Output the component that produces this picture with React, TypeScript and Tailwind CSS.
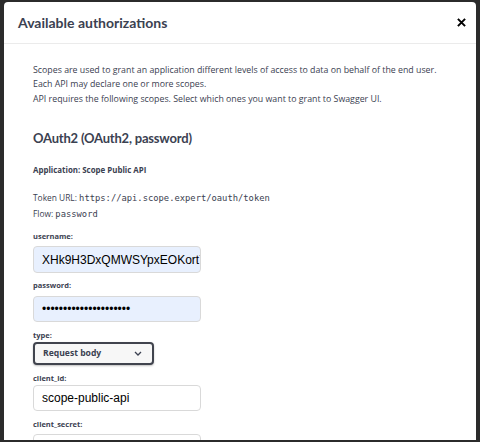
import React from "react";

const label = "block text-[7.5px] font-bold leading-[12px] text-[#3b4151]";
const input =
  "block w-[168px] rounded-[4px] border border-[#d9d9d9] pl-[8px] text-[12px] text-black outline-none";
const sans = { fontFamily: '"Liberation Sans", Arial, sans-serif' };
const mono = { fontFamily: '"DejaVu Sans Mono", monospace' };

const App: React.FC = () => {
  return (
    <div className="h-[442px] w-[480px] overflow-hidden bg-[#2b2b2b] pl-[4px] pr-[4px] pt-[2px] pb-[2px]">
      <div
        className="h-[438px] overflow-hidden rounded-t-[4px] bg-white text-[#3b4151]"
        style={{ fontFamily: '"Open Sans", sans-serif' }}
      >
        {/* header */}
        <div className="flex h-[42px] items-center justify-between border-b border-[#ebebeb] pl-[14px] pr-[10px]">
          <h3 className="text-[14px] font-bold text-[#3b4151]" style={{ fontFamily: "Lato, sans-serif" }}>
            Available authorizations
          </h3>
          <svg width="9" height="9" viewBox="0 0 10 10" className="mt-[-1px]">
            <path d="M1 1 L9 9 M9 1 L1 9" stroke="#000" strokeWidth="2.2" />
          </svg>
        </div>

        <div className="pl-[29px] pt-[19px]">
          <p className="text-[8.8px] leading-[14px]">
            Scopes are used to grant an application different levels of access to data on behalf of the end user.
            <br />
            Each API may declare one or more scopes.
          </p>
          <p className="mt-[1px] text-[8.8px] leading-[14px]">
            API requires the following scopes. Select which ones you want to grant to Swagger UI.
          </p>

          <h4
            className="mt-[22px] text-[13px] font-bold leading-[20px] tracking-[-0.2px]"
            style={{ fontFamily: "Lato, sans-serif" }}
          >
            OAuth2 (OAuth2, password)
          </h4>

          <h6 className="mt-[15px] text-[7.9px] font-bold leading-[14px]">Application: Scope Public API</h6>

          <p className="mt-[13px] text-[8.4px] leading-[16px]">
            Token URL:{" "}
            <code className="text-[8.8px]" style={mono}>
              https://api.scope.expert/oauth/token
            </code>
          </p>
          <p className="text-[8.4px] leading-[16px]">
            Flow:{" "}
            <code className="text-[8.8px]" style={mono}>
              password
            </code>
          </p>

          <label className={`${label} mt-[8px]`}>username:</label>
          <input
            className={`${input} mt-[4px] h-[27px] bg-[#e8f0fe]`}
            style={sans}
            defaultValue="XHk9H3DxQMWSYpxEOKort7a"
            readOnly
          />

          <label className={`${label} mt-[6px]`}>password:</label>
          <input
            type="password"
            className={`${input} mt-[5px] h-[26px] bg-[#e8f0fe]`}
            style={sans}
            defaultValue="abcdefghijklmnopqrstu"
            readOnly
          />

          <label className={`${label} mt-[7px]`}>type:</label>
          <div className="mt-[1px] flex h-[23px] w-[121px] items-center justify-between rounded-[4px] border-2 border-[#41444e] bg-[#f7f7f7] pl-[8px] pr-[10px] shadow-[0_1px_2px_0_rgba(0,0,0,0.25)]">
            <span className="text-[8.6px] font-bold">Request body</span>
            <svg width="8" height="5" viewBox="0 0 8 5">
              <path d="M1 1 L4 4 L7 1" fill="none" stroke="#3b4151" strokeWidth="1.3" />
            </svg>
          </div>

          <label className={`${label} mt-[7px]`}>client_id:</label>
          <input
            className={`${input} mt-[1px] h-[26px] bg-white`}
            style={sans}
            defaultValue="scope-public-api"
            readOnly
          />

          <label className={`${label} mt-[7px]`}>client_secret:</label>
          <input className={`${input} mt-[4px] h-[26px] bg-white`} style={sans} defaultValue="" readOnly />
        </div>
      </div>
    </div>
  );
};

export default App;
